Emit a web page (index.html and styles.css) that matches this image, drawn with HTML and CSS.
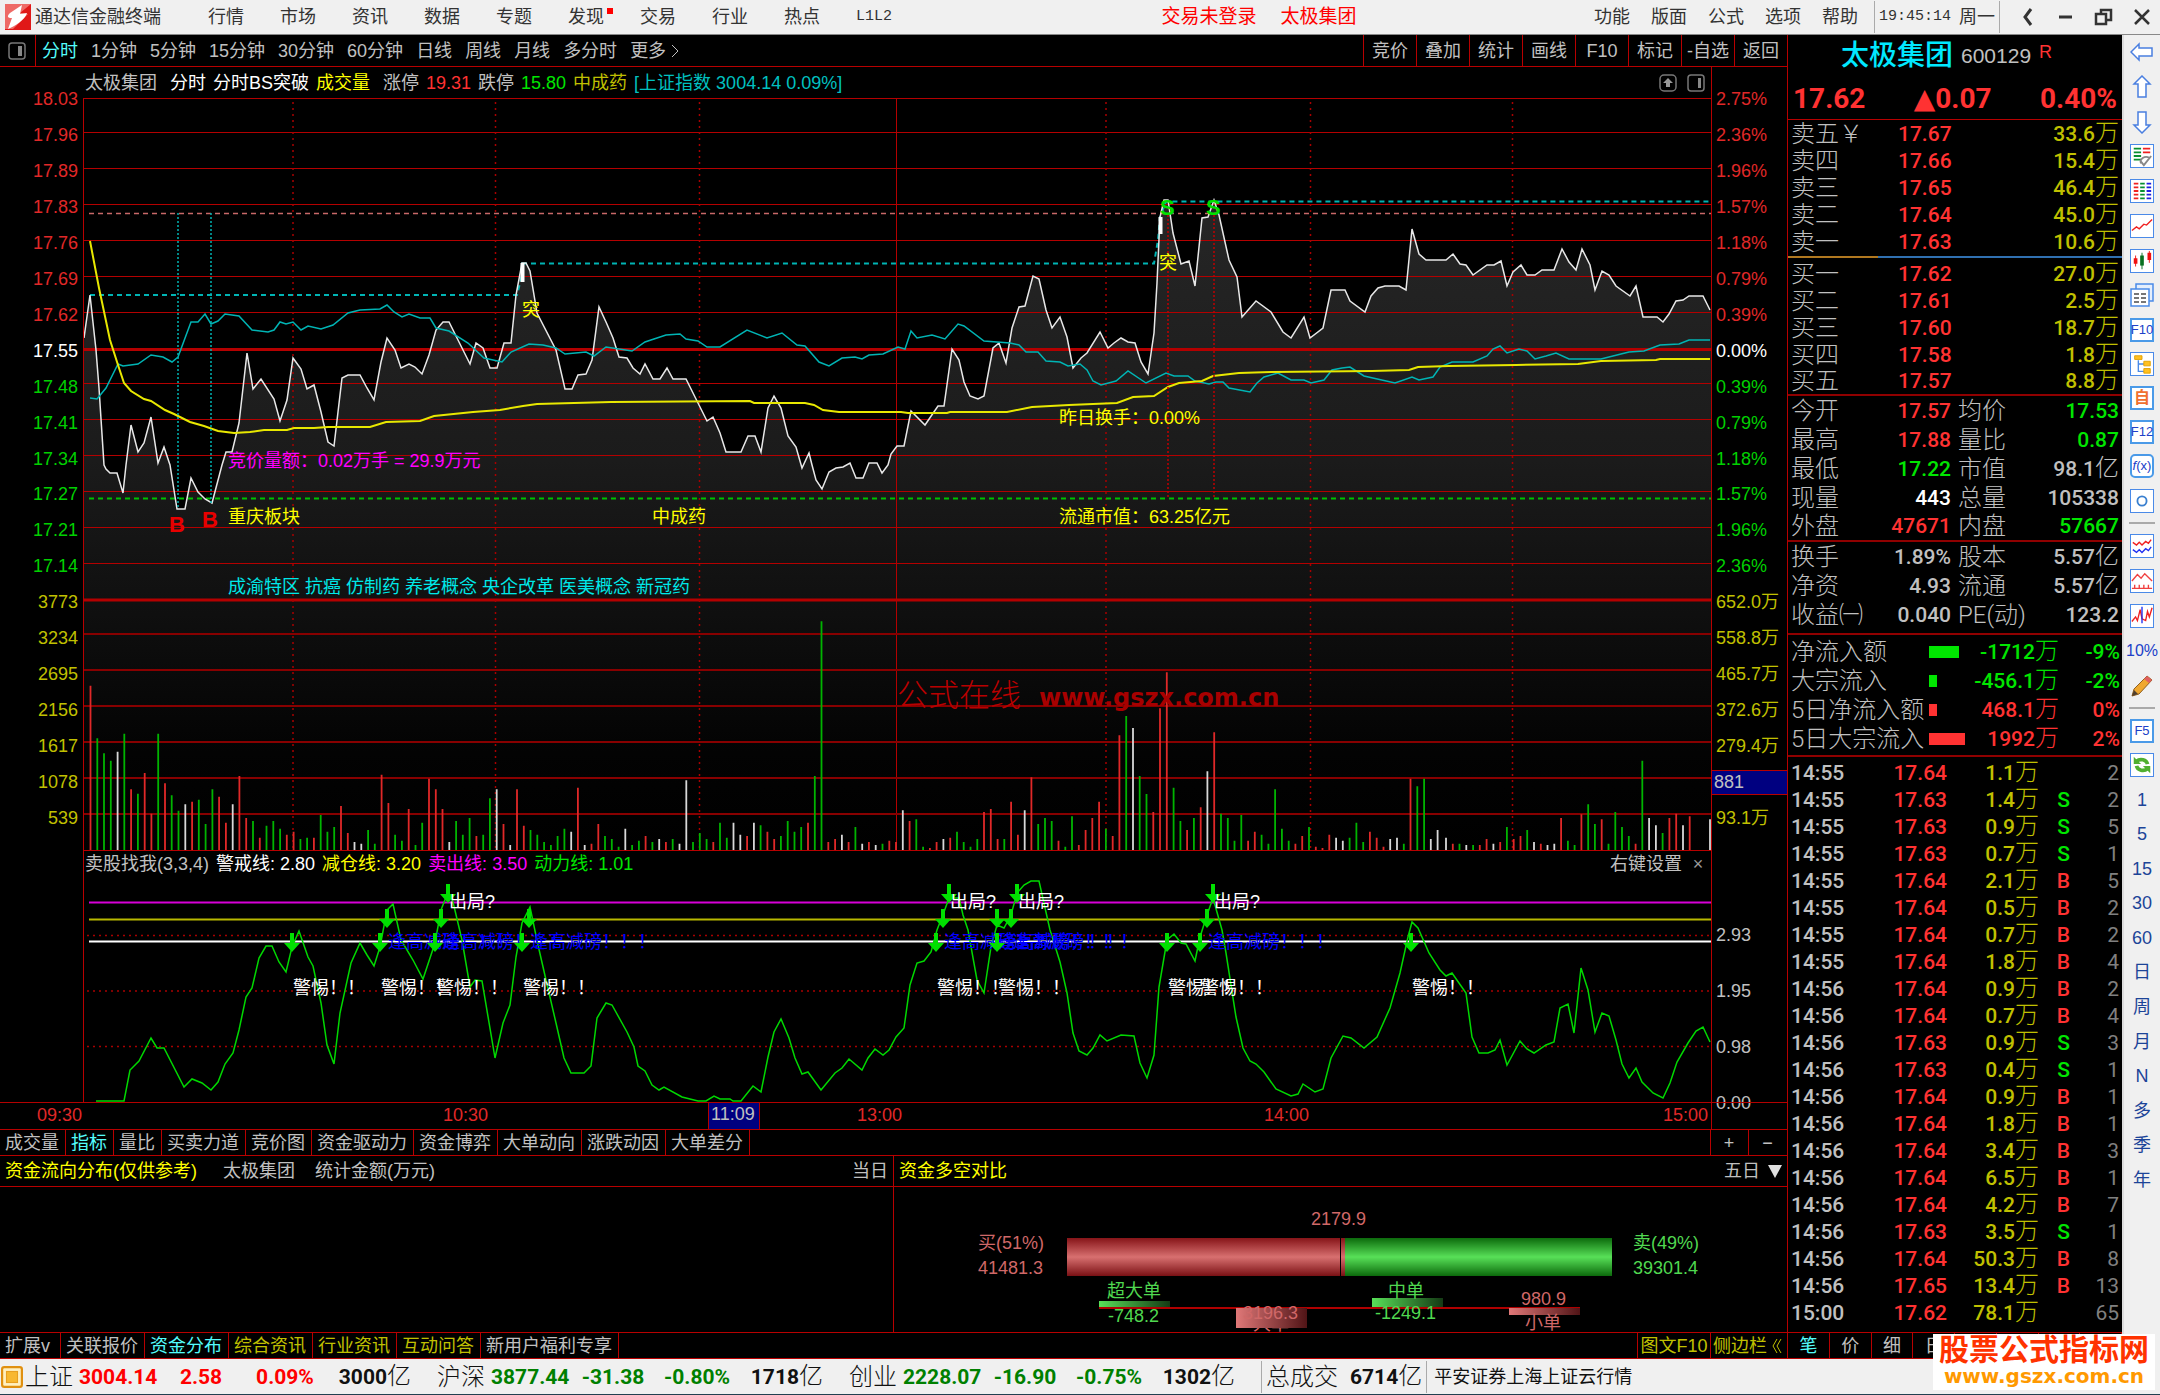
FILE: index.html
```html
<!DOCTYPE html>
<html lang="zh-CN">
<head>
    <meta charset="UTF-8">
    <meta name="viewport" content="width=device-width, initial-scale=1.0">
    <title>通达信金融终端</title>
    <link rel="stylesheet" href="styles.css">
</head>
<body>

    <header class="titlebar">
        <svg class="logo" viewBox="0 0 26 26">
            <rect width="26" height="26" fill="#e01818"/>
            <path d="M0 0h26L15 9l8 1L8 25H0z" fill="#ee6a66"/>
            <path d="M17 1L5 9c-3 3-3 5 2 5L3 25c7-3 17-9 19-16l-7 1z" fill="#fff"/>
        </svg>
        <span class="app-name">通达信金融终端</span>
        <nav class="menu">
            <button>行情</button>
            <button>市场</button>
            <button>资讯</button>
            <button>数据</button>
            <button>专题</button>
            <button class="has-dot">发现</button>
            <button>交易</button>
            <button>行业</button>
            <button>热点</button>
            <button class="mono">L1L2</button>
        </nav>
        <div class="account">
            <button>交易未登录</button>
            <button>太极集团</button>
        </div>
        <nav class="menu-right">
            <button>功能</button>
            <button>版面</button>
            <button>公式</button>
            <button>选项</button>
            <button>帮助</button>
        </nav>
        <div class="clock"><span class="mono">19:45:14</span> 周一</div>
        <div class="window-btns">
            <button aria-label="后退"><svg viewBox="0 0 20 20"><path d="M13 2L7 10l6 8" stroke-width="3"/></svg></button>
            <button aria-label="最小化"><svg viewBox="0 0 20 20"><path d="M3 10h13" stroke-width="3"/></svg></button>
            <button aria-label="还原"><svg viewBox="0 0 20 20"><path d="M2 7h10v10H2zM7 7V3h10v10h-5" stroke-width="2.5"/></svg></button>
            <button aria-label="关闭"><svg viewBox="0 0 20 20"><path d="M3 3l14 14M17 3L3 17" stroke-width="2.5"/></svg></button>
        </div>
    </header>

    <div class="main">
        <div class="workspace">

            <nav class="toolbar">
                <button class="toggle" aria-label="侧栏">
                    <svg viewBox="0 0 18 18"><rect x="1" y="1" width="16" height="16" rx="3" fill="none" stroke="#777" stroke-width="1.5"/><rect x="10" y="4" width="4" height="10" fill="#888"/></svg>
                </button>
                <div class="periods">
                    <button class="active">分时</button>
                    <button>1分钟</button>
                    <button>5分钟</button>
                    <button>15分钟</button>
                    <button>30分钟</button>
                    <button>60分钟</button>
                    <button>日线</button>
                    <button>周线</button>
                    <button>月线</button>
                    <button>多分时</button>
                    <button class="more">更多<svg viewBox="0 0 10 18"><path d="M2 3l6 6-6 6" fill="none" stroke="#c0c0c0"/></svg></button>
                </div>
                <div class="tools">
                    <button>竞价</button>
                    <button>叠加</button>
                    <button>统计</button>
                    <button>画线</button>
                    <button>F10</button>
                    <button>标记</button>
                    <button>-自选</button>
                    <button>返回</button>
                </div>
            </nav>

            <section class="chart">
                <div class="axis axis-left">
                    <span class="up">18.03</span><span class="up">17.96</span><span class="up">17.89</span><span class="up">17.83</span><span class="up">17.76</span><span class="up">17.69</span><span class="up">17.62</span>
                    <span class="flat">17.55</span>
                    <span class="down">17.48</span><span class="down">17.41</span><span class="down">17.34</span><span class="down">17.27</span><span class="down">17.21</span><span class="down">17.14</span>
                    <span class="vol">3773</span><span class="vol">3234</span><span class="vol">2695</span><span class="vol">2156</span><span class="vol">1617</span><span class="vol">1078</span><span class="vol">539</span>
                </div>

                <div class="legend">
                    <span class="gray wide">太极集团</span>
                    <span class="white">分时</span>
                    <span class="white">分时BS突破</span>
                    <span class="yellow wide">成交量</span>
                    <span class="gray">涨停</span>
                    <span class="up">19.31</span>
                    <span class="gray">跌停</span>
                    <span class="down">15.80</span>
                    <span class="vol">中成药</span>
                    <span class="teal">[上证指数 3004.14 0.09%]</span>
                    <span class="legend-icons">
                        <svg viewBox="0 0 18 18"><rect x="1" y="1" width="16" height="16" rx="4" fill="none" stroke="#777" stroke-width="1.5"/><path d="M9 4l5 5h-3v4H7V9H4z" fill="#999"/></svg>
                        <svg viewBox="0 0 18 18"><rect x="1" y="1" width="16" height="16" rx="3" fill="none" stroke="#777" stroke-width="1.5"/><rect x="11" y="4" width="3" height="10" fill="#888"/></svg>
                    </span>
                </div>

                <svg class="plot" viewBox="84 98 1627 752">
                    <defs>
                        <linearGradient id="shade" gradientUnits="userSpaceOnUse" x1="0" y1="200" x2="0" y2="850">
                            <stop offset="0" stop-color="#262626"/>
                            <stop offset="0.4" stop-color="#1b1b1b"/>
                            <stop offset="0.62" stop-color="#101010"/>
                            <stop offset="0.85" stop-color="#030303"/>
                            <stop offset="1" stop-color="#000"/>
                        </linearGradient>
                    </defs>
                    <path id="price-area" fill="url(#shade)"/>

                    <path class="grid" d="M84 98.5H1711M84 132.5H1711M84 168.5H1711M84 204.5H1711M84 240.5H1711M84 276.5H1711M84 312.5H1711M84 383.5H1711M84 419.5H1711M84 455.5H1711M84 491.5H1711M84 527.5H1711M84 563.5H1711M896.5 98V850"/>
                    <path class="grid mid" d="M84 349.5H1711M84 600H1711"/>
                    <path class="grid low" d="M84 634H1711M84 670H1711M84 706H1711M84 742H1711M84 778H1711M84 814H1711"/>
                    <path class="grid dots" d="M293 102V850M495.5 102V850M699.5 102V850M1106 102V850M1310.5 102V850M1512.5 102V850"/>

                    <path class="dash teal-line" d="M90 295H517L521 279L522 263.5H1154L1158 240L1160 217L1166 201.5H1711"/>
                    <path class="dash pink-line" d="M89 213.5H1711"/>
                    <path class="dash green-line" d="M89 498.5H1711"/>

                    <polyline id="price-line" class="line white-line" points="84,338 90,295 96,350 99,388 104,465 106,469 110,473 117,473 123,493 126,465 131,425 138,452 144,443 151,417 158,463 164,447 170,465 177,509 185,509 191,478 198,492 205,499 212,503 222,465 226,452 232,452 239,423 247,353 253,389 261,379 274,399 280,421 287,400 293,358 301,369 307,389 314,385 321,412 328,442 334,446 342,378 348,375 360,375 367,388 374,400 381,362 387,338 395,350 401,368 409,364 415,367 422,374 429,355 436,330 443,322 449,322 459,342 470,364 476,343 483,348 490,368 497,368 504,343 511,343 516,295 522,263 526,263 530,271 537,313 556,350 565,389 572,389 578,375 586,374 592,360 599,307 606,322 613,338 619,357 627,358 633,368 640,374 645,364 653,379 660,379 667,368 673,379 686,379 699,405 707,421 713,417 720,433 726,452 741,452 748,436 755,436 761,452 768,408 774,396 781,408 788,436 796,447 802,468 809,453 812,465 816,480 822,489 829,472 836,468 843,467 850,463 856,478 863,478 869,463 877,463 882,473 888,465 891,454 897,446 904,446 911,411 925,425 938,406 944,406 952,349 959,360 964,382 970,396 978,399 984,396 993,348 999,343 1006,363 1012,328 1019,307 1025,306 1033,276 1039,279 1046,310 1052,328 1060,317 1067,337 1073,368 1081,358 1087,353 1100,332 1108,348 1114,343 1121,338 1128,342 1135,343 1141,362 1148,374 1154,333 1157,283 1160,217 1164,200 1168,200 1173,233 1181,264 1189,261 1195,286 1202,218 1208,217 1214,200 1219,215 1229,260 1237,277 1242,317 1256,301 1271,312 1283,332 1291,338 1304,317 1310,338 1323,328 1331,290 1345,290 1350,301 1365,312 1371,296 1378,288 1385,286 1399,286 1406,290 1412,229 1419,254 1426,260 1446,260 1453,254 1460,264 1466,265 1473,275 1487,265 1494,265 1501,261 1507,286 1513,272 1521,265 1527,275 1535,275 1542,270 1554,270 1562,249 1569,262 1576,270 1582,249 1590,265 1595,290 1602,271 1609,275 1616,286 1630,296 1636,286 1643,317 1657,317 1663,322 1669,314 1676,301 1683,300 1689,296 1703,296 1710,310"/>
                    <polyline class="line teal-line" points="90,398 97,399 106,388 118,364 123,366 138,364 151,355 163,357 172,362 178,357 191,322 198,322 205,314 211,324 218,321 225,314 239,316 252,330 268,332 274,330 280,322 286,324 293,322 301,330 308,326 321,329 333,325 348,313 360,310 380,309 387,305 394,312 402,317 409,314 420,318 430,318 436,328 449,331 468,343 484,358 502,362 511,352 529,344 543,345 556,348 565,354 586,352 594,356 606,347 632,351 645,342 666,335 680,334 686,339 698,341 707,347 720,347 747,330 767,338 782,333 797,345 805,346 819,362 829,366 842,358 855,357 862,359 869,355 883,354 898,347 905,349 911,331 917,338 932,335 945,339 958,324 964,326 984,341 1010,343 1019,345 1026,352 1038,352 1046,361 1060,362 1068,366 1080,364 1087,370 1093,381 1101,385 1116,381 1128,371 1146,383 1166,373 1174,376 1188,376 1195,381 1209,384 1216,382 1223,382 1229,388 1250,392 1257,383 1264,377 1278,373 1291,380 1304,380 1311,383 1324,380 1332,370 1342,368 1350,367 1364,376 1395,383 1412,377 1419,380 1433,377 1440,367 1452,362 1473,362 1487,356 1493,349 1500,346 1507,353 1519,349 1527,351 1535,359 1546,356 1556,353 1569,359 1601,359 1629,352 1644,351 1660,345 1679,344 1689,340 1710,340"/>
                    <polyline class="line yellow-line" points="90,241 99,288 110,340 118,365 124,383 131,391 144,399 151,401 165,410 174,414 190,422 204,426 218,431 234,433 250,432 264,430 287,430 294,428 314,428 328,427 370,427 386,422 420,421 434,416 473,412 500,410 523,406 537,404 574,403 611,402 750,401 754,403 805,403 814,405 823,410 839,412 901,412 908,413 947,413 950,412 1007,412 1032,407 1069,405 1117,403 1133,397 1154,396 1168,387 1179,383 1202,381 1213,376 1239,373 1271,372 1372,371 1409,370 1418,367 1449,366 1516,365 1578,364 1601,361 1656,360 1660,359 1710,359"/>

                    <path class="fine teal-line" d="M178 213V509M211 213V503"/>
                    <path class="fine red-line" d="M1168 215V499M1214 215V499"/>
                    <path d="M522.5 263V282M1160.5 217V234" stroke="#fff" stroke-width="4"/>

                    <g id="volume"></g>

                    <g class="mark sell"><text x="1160" y="215">S</text><text x="1206" y="215">S</text></g>
                    <g class="mark buy"><text x="169" y="532">B</text><text x="202" y="527">B</text></g>
                    <g class="note yellow-fill">
                        <text x="522" y="316">突</text><text x="1159" y="269">突</text>
                        <text x="1059" y="424">昨日换手：0.00%</text>
                        <text x="228" y="523">重庆板块</text><text x="652" y="523">中成药</text><text x="1059" y="523">流通市值：63.25亿元</text>
                    </g>
                    <text class="note magenta-fill" x="228" y="467">竞价量额：0.02万手 = 29.9万元</text>
                    <text class="note cyan-fill" x="228" y="593">成渝特区 抗癌 仿制药 养老概念 央企改革 医美概念 新冠药</text>
                    <text class="mark-cn" x="897" y="706">公式在线</text>
                    <text class="mark-url" x="1039" y="706">www.gszx.com.cn</text>
                </svg>

                <div class="axis axis-right">
                    <span class="up">2.75%</span><span class="up">2.36%</span><span class="up">1.96%</span><span class="up">1.57%</span><span class="up">1.18%</span><span class="up">0.79%</span><span class="up">0.39%</span>
                    <span class="flat">0.00%</span>
                    <span class="down">0.39%</span><span class="down">0.79%</span><span class="down">1.18%</span><span class="down">1.57%</span><span class="down">1.96%</span><span class="down">2.36%</span>
                    <span class="vol">652.0万</span><span class="vol">558.8万</span><span class="vol">465.7万</span><span class="vol">372.6万</span><span class="vol">279.4万</span><span class="cursor"><b>881</b></span><span class="vol">93.1万</span>
                </div>

                <div class="axis-blank"></div>
                <div class="legend sub">
                    <span class="gray">卖股找我(3,3,4)</span>
                    <span class="white">警戒线: 2.80</span>
                    <span class="yellow">减仓线: 3.20</span>
                    <span class="magenta">卖出线: 3.50</span>
                    <span class="green">动力线: 1.01</span>
                    <span class="legend-icons"><span class="gray">右键设置</span><button class="close" aria-label="关闭指标">×</button></span>
                </div>

                <svg class="plot indicator" viewBox="84 877 1627 225">
                    <defs>
                        <symbol id="arrow" viewBox="0 0 16 20" width="16" height="20"><path d="M6 0h4v10h6l-8 9l-8-9h6z" fill="#00e000"/></symbol>
                    </defs>
                    <path class="grid dots" d="M87 935.5H1711M87 991H1711M87 1046.5H1711"/>
                    <path d="M89 902.5H1711" stroke="#d800d8" stroke-width="2"/>
                    <path d="M89 919.5H1711" stroke="#b8b800" stroke-width="2"/>
                    <path d="M89 941.5H1711" stroke="#fff" stroke-width="2"/>
                    <polyline class="line lime-line" points="96,1101 124,1101 130,1070 139,1061 151,1038 157,1048 164,1048 184,1087 192,1079 202,1083 211,1090 218,1082 225,1064 233,1053 239,1030 246,997 252,988 259,958 266,946 272,946 279,962 286,972 292,947 299,931 308,957 313,966 321,1003 327,1045 334,1064 340,1013 351,963 360,943 367,955 374,966 380,947 387,910 393,904 401,940 413,960 423,979 435,943 441,910 448,892 453,902 462,940 470,987 475,980 482,981 495,1058 503,1023 510,1005 516,957 522,923 530,907 538,945 546,980 556,1023 564,1058 571,1073 584,1073 591,1066 597,1018 606,1003 612,1005 627,1032 634,1047 638,1066 645,1071 652,1085 659,1090 664,1087 682,1097 698,1101 706,1101 714,1096 720,1099 730,1099 733,1101 741,1101 753,1086 761,1092 768,1057 774,1032 781,1019 789,1038 795,1058 802,1074 808,1072 821,1090 835,1073 842,1068 849,1059 862,1070 868,1058 875,1049 883,1055 889,1050 896,1037 904,1028 910,985 917,963 924,961 931,952 937,930 944,912 949,898 959,898 963,915 968,930 977,980 984,993 991,947 997,925 1004,928 1011,915 1017,893 1024,885 1031,881 1039,881 1050,930 1060,962 1067,993 1073,1033 1079,1051 1087,1055 1093,1048 1100,1035 1107,1041 1121,1035 1134,1036 1140,1063 1147,1078 1154,1055 1159,987 1167,940 1174,934 1181,943 1186,944 1195,961 1200,937 1207,915 1213,898 1222,930 1226,953 1236,1017 1243,1048 1250,1061 1256,1064 1264,1072 1276,1089 1291,1096 1298,1094 1303,1084 1315,1092 1323,1089 1331,1058 1343,1036 1351,1038 1364,1048 1377,1037 1390,1008 1400,973 1408,937 1412,922 1418,928 1429,953 1440,970 1446,976 1452,973 1466,993 1472,1037 1479,1053 1488,1053 1495,1050 1500,1040 1507,1065 1520,1041 1527,1049 1534,1053 1546,1045 1554,1042 1560,1008 1568,1004 1574,1033 1581,968 1588,990 1595,1032 1602,1013 1609,1016 1616,1040 1622,1064 1629,1078 1636,1068 1642,1082 1653,1093 1663,1098 1670,1083 1677,1062 1688,1043 1696,1031 1703,1027 1710,1042"/>
                    <g class="note blue-fill">
                        <text x="388" y="948">逢高减磅！！！</text><text x="442" y="948">逢高减磅！！！</text><text x="530" y="948">逢高减磅！！！</text>
                        <text x="944" y="948">逢高减磅！！！</text><text x="998" y="948">逢高减磅！！！</text><text x="1012" y="948">逢高减磅！！！</text><text x="1208" y="948">逢高减磅！！！</text>
                    </g>
                    <use href="#arrow" x="440" y="884"/><use href="#arrow" x="941" y="884"/><use href="#arrow" x="1009" y="884"/><use href="#arrow" x="1205" y="884"/>
                    <use href="#arrow" x="379" y="909"/><use href="#arrow" x="433" y="909"/><use href="#arrow" x="521" y="909"/><use href="#arrow" x="935" y="909"/><use href="#arrow" x="989" y="909"/><use href="#arrow" x="1003" y="909"/><use href="#arrow" x="1199" y="909"/>
                    <use href="#arrow" x="284" y="933"/><use href="#arrow" x="372" y="933"/><use href="#arrow" x="427" y="933"/><use href="#arrow" x="514" y="933"/><use href="#arrow" x="928" y="933"/><use href="#arrow" x="989" y="933"/><use href="#arrow" x="1159" y="933"/><use href="#arrow" x="1192" y="933"/><use href="#arrow" x="1403" y="933"/>
                    <g class="note white-fill">
                        <text x="449" y="908">出局?</text><text x="950" y="908">出局?</text><text x="1018" y="908">出局?</text><text x="1214" y="908">出局?</text>
                        <text x="293" y="994">警惕！！</text><text x="381" y="994">警惕！！</text><text x="436" y="994">警惕！！</text><text x="523" y="994">警惕！！</text>
                        <text x="937" y="994">警惕！！</text><text x="998" y="994">警惕！！</text><text x="1168" y="994">警惕！！</text><text x="1201" y="994">警惕！！</text><text x="1412" y="994">警惕！！</text>
                    </g>
                </svg>
                <div class="axis axis-sub">
                    <span>2.93</span><span>1.95</span><span>0.98</span><span>0.00</span>
                </div>

                <svg class="timeline" viewBox="0 1102 1787 27">
                    <path class="grid" d="M0 1102.5H1787M708.5 1102V1129M759.5 1102V1129M1711.5 1102V1129"/>
                    <rect x="709" y="1103" width="50" height="26" fill="#000080"/>
                    <g class="note time">
                        <text x="37" y="1121">09:30</text><text x="443" y="1121">10:30</text><text x="857" y="1121">13:00</text><text x="1264" y="1121">14:00</text><text x="1663" y="1121">15:00</text>
                    </g>
                    <text class="note gray-fill" x="711" y="1120">11:09</text>
                </svg>
            </section>

            <nav class="tabs">
                <button>成交量</button>
                <button class="active">指标</button>
                <button>量比</button>
                <button>买卖力道</button>
                <button>竞价图</button>
                <button>资金驱动力</button>
                <button>资金博弈</button>
                <button>大单动向</button>
                <button>涨跌动因</button>
                <button>大单差分</button>
                <span class="tabs-end zoom">
                    <button aria-label="放大">+</button>
                    <button aria-label="缩小">−</button>
                </span>
            </nav>

            <div class="funds">
                <section class="fund-panel">
                    <div class="fund-head">
                        <h2>资金流向分布(仅供参考)</h2>
                        <span>太极集团</span>
                        <span>统计金额(万元)</span>
                        <span class="push">当日</span>
                    </div>
                </section>
                <section class="fund-panel">
                    <div class="fund-head">
                        <h2>资金多空对比</h2>
                        <button class="push">五日 <i class="caret"></i></button>
                    </div>
                    <svg class="balance" viewBox="894 1187 893 145">
                        <defs>
                            <linearGradient id="buy" x2="0" y2="1"><stop offset="0" stop-color="#861418"/><stop offset="0.5" stop-color="#d87070"/><stop offset="1" stop-color="#7a1014"/></linearGradient>
                            <linearGradient id="sell" x2="0" y2="1"><stop offset="0" stop-color="#0c6a0c"/><stop offset="0.5" stop-color="#58e058"/><stop offset="1" stop-color="#0c6a0c"/></linearGradient>
                            <linearGradient id="out"><stop offset="0" stop-color="#58e058"/><stop offset="1" stop-color="#143a14"/></linearGradient>
                            <linearGradient id="in"><stop offset="0" stop-color="#e07878"/><stop offset="1" stop-color="#501416"/></linearGradient>
                        </defs>
                        <rect x="1067" y="1238" width="273" height="38" fill="url(#buy)"/>
                        <rect x="1341" y="1238" width="4" height="38" fill="url(#buy)"/>
                        <rect x="1345" y="1238" width="267" height="38" fill="url(#sell)"/>
                        <g class="note rose-fill">
                            <text x="1311" y="1225">2179.9</text>
                            <text x="978" y="1249">买(51%)</text><text x="978" y="1274">41481.3</text>
                            <text x="1253" y="1330">大单</text>
                        </g>
                        <path d="M1099 1308H1580" stroke="#b00000" stroke-width="2"/>
                        <rect x="1099" y="1301" width="71" height="6" fill="url(#out)"/>
                        <rect x="1372" y="1298" width="71" height="9" fill="url(#out)"/>
                        <rect x="1236" y="1308" width="71" height="20" fill="url(#in)"/>
                        <rect x="1509" y="1308" width="71" height="7" fill="url(#in)"/>
                        <g class="note rose-fill">
                            <text x="1243" y="1319">3196.3</text>
                            <text x="1521" y="1305">980.9</text><text x="1525" y="1329">小单</text>
                        </g>
                        <g class="note leaf-fill">
                            <text x="1633" y="1249">卖(49%)</text><text x="1633" y="1274">39301.4</text>
                            <text x="1107" y="1297">超大单</text><text x="1108" y="1322">-748.2</text>
                            <text x="1388" y="1297">中单</text><text x="1375" y="1319">-1249.1</text>
                        </g>
                    </svg>
                </section>
            </div>

            <nav class="tabs bottom">
                <button class="expand">扩展v</button>
                <button>关联报价</button>
                <button class="active">资金分布</button>
                <button class="vol">综合资讯</button>
                <button class="vol">行业资讯</button>
                <button class="vol">互动问答</button>
                <button>新用户福利专享</button>
                <span class="tabs-end">
                    <button class="vol">图文F10</button>
                    <button class="vol side">侧边栏<svg viewBox="0 0 12 18"><path d="M6 2L2 9l4 7M10 2L6 9l4 7" fill="none" stroke="#c0c000"/></svg></button>
                </span>
            </nav>
        </div>

        <aside class="quote">
            <div class="quote-head">
                <div class="stock"><h1>太极集团</h1><span>600129</span><sup>R</sup></div>
                <div class="last"><span>17.62</span><span>▲0.07</span><span>0.40%</span></div>
            </div>

            <table class="book">
                <tr><th>卖五￥</th><td class="up">17.67</td><td class="vol">33.6<i>万</i></td></tr>
                <tr><th>卖四</th><td class="up">17.66</td><td class="vol">15.4<i>万</i></td></tr>
                <tr><th>卖三</th><td class="up">17.65</td><td class="vol">46.4<i>万</i></td></tr>
                <tr><th>卖二</th><td class="up">17.64</td><td class="vol">45.0<i>万</i></td></tr>
                <tr><th>卖一</th><td class="up">17.63</td><td class="vol">10.6<i>万</i></td></tr>
            </table>
            <div class="ratio"></div>
            <table class="book line-below">
                <tr><th>买一</th><td class="up">17.62</td><td class="vol">27.0<i>万</i></td></tr>
                <tr><th>买二</th><td class="up">17.61</td><td class="vol">2.5<i>万</i></td></tr>
                <tr><th>买三</th><td class="up">17.60</td><td class="vol">18.7<i>万</i></td></tr>
                <tr><th>买四</th><td class="up">17.58</td><td class="vol">1.8<i>万</i></td></tr>
                <tr><th>买五</th><td class="up">17.57</td><td class="vol">8.8<i>万</i></td></tr>
            </table>

            <table class="facts line-below">
                <tr><th>今开</th><td class="up">17.57</td><th>均价</th><td class="down">17.53</td></tr>
                <tr><th>最高</th><td class="up">17.88</td><th>量比</th><td class="down">0.87</td></tr>
                <tr><th>最低</th><td class="down">17.22</td><th>市值</th><td>98.1<i>亿</i></td></tr>
                <tr><th>现量</th><td class="white">443</td><th>总量</th><td>105338</td></tr>
                <tr><th>外盘</th><td class="up">47671</td><th>内盘</th><td class="down">57667</td></tr>
            </table>
            <table class="facts">
                <tr><th>换手</th><td>1.89%</td><th>股本</th><td>5.57<i>亿</i></td></tr>
                <tr><th>净资</th><td>4.93</td><th>流通</th><td>5.57<i>亿</i></td></tr>
                <tr><th>收益㈠</th><td>0.040</td><th>PE(动)</th><td>123.2</td></tr>
            </table>

            <div class="flow-box">
                <table class="flows">
                    <tr class="down"><th>净流入额</th><td><span class="bar" style="width: 30px"></span></td><td>-1712<i>万</i></td><td>-9%</td></tr>
                    <tr class="down"><th>大宗流入</th><td><span class="bar" style="width: 8px"></span></td><td>-456.1<i>万</i></td><td>-2%</td></tr>
                    <tr class="up"><th>5日净流入额</th><td><span class="bar" style="width: 8px"></span></td><td>468.1<i>万</i></td><td>0%</td></tr>
                    <tr class="up"><th>5日大宗流入</th><td><span class="bar" style="width: 36px"></span></td><td>1992<i>万</i></td><td>2%</td></tr>
                </table>
            </div>

            <table class="ticks">
                <tr><td>14:55</td><td>17.64</td><td>1.1<i>万</i></td><td></td><td>2</td></tr>
                <tr><td>14:55</td><td>17.63</td><td>1.4<i>万</i></td><td class="down">S</td><td>2</td></tr>
                <tr><td>14:55</td><td>17.63</td><td>0.9<i>万</i></td><td class="down">S</td><td>5</td></tr>
                <tr><td>14:55</td><td>17.63</td><td>0.7<i>万</i></td><td class="down">S</td><td>1</td></tr>
                <tr><td>14:55</td><td>17.64</td><td>2.1<i>万</i></td><td class="up">B</td><td>5</td></tr>
                <tr><td>14:55</td><td>17.64</td><td>0.5<i>万</i></td><td class="up">B</td><td>2</td></tr>
                <tr><td>14:55</td><td>17.64</td><td>0.7<i>万</i></td><td class="up">B</td><td>2</td></tr>
                <tr><td>14:55</td><td>17.64</td><td>1.8<i>万</i></td><td class="up">B</td><td>4</td></tr>
                <tr><td>14:56</td><td>17.64</td><td>0.9<i>万</i></td><td class="up">B</td><td>2</td></tr>
                <tr><td>14:56</td><td>17.64</td><td>0.7<i>万</i></td><td class="up">B</td><td>4</td></tr>
                <tr><td>14:56</td><td>17.63</td><td>0.9<i>万</i></td><td class="down">S</td><td>3</td></tr>
                <tr><td>14:56</td><td>17.63</td><td>0.4<i>万</i></td><td class="down">S</td><td>1</td></tr>
                <tr><td>14:56</td><td>17.64</td><td>0.9<i>万</i></td><td class="up">B</td><td>1</td></tr>
                <tr><td>14:56</td><td>17.64</td><td>1.8<i>万</i></td><td class="up">B</td><td>1</td></tr>
                <tr><td>14:56</td><td>17.64</td><td>3.4<i>万</i></td><td class="up">B</td><td>3</td></tr>
                <tr><td>14:56</td><td>17.64</td><td>6.5<i>万</i></td><td class="up">B</td><td>1</td></tr>
                <tr><td>14:56</td><td>17.64</td><td>4.2<i>万</i></td><td class="up">B</td><td>7</td></tr>
                <tr><td>14:56</td><td>17.63</td><td>3.5<i>万</i></td><td class="down">S</td><td>1</td></tr>
                <tr><td>14:56</td><td>17.64</td><td>50.3<i>万</i></td><td class="up">B</td><td>8</td></tr>
                <tr><td>14:56</td><td>17.65</td><td>13.4<i>万</i></td><td class="up">B</td><td>13</td></tr>
                <tr><td>15:00</td><td>17.62</td><td>78.1<i>万</i></td><td></td><td>65</td></tr>
            </table>

            <nav class="quote-tabs">
                <button class="active">笔</button><button>价</button><button>细</button><button>日</button><span></span><span></span><span></span><span></span>
            </nav>
        </aside>

        <nav class="sidebar">
            <div class="side-group">
                <button aria-label="返回"><svg viewBox="0 0 24 24"><path d="M1 12l8-8v4h13v8H9v4z" fill="#fff" stroke="#4a7fe0" stroke-width="1.5"/></svg></button>
                <button aria-label="向上"><svg viewBox="0 0 24 24"><path d="M12 1l8 8h-4v13H8V9H4z" fill="#fff" stroke="#4a7fe0" stroke-width="1.5"/></svg></button>
                <button aria-label="向下"><svg viewBox="0 0 24 24"><path d="M12 23l8-8h-4V2H8v13H4z" fill="#fff" stroke="#4a7fe0" stroke-width="1.5"/></svg></button>
                <button class="boxed" aria-label="自选报价"><svg viewBox="0 0 24 24"><path d="M3 4h8M3 8h8M3 12h8M3 16h8" stroke="#089030" stroke-width="2"/><path d="M13 4h8M13 8h8" stroke="#f02020" stroke-width="2"/><path d="M10 17l4 5 8-10M11 20a6 5 0 0 1 9-6" fill="none" stroke="#888" stroke-width="2"/></svg></button>
                <button class="boxed" aria-label="行情列表"><svg viewBox="0 0 24 24" stroke-width="2"><path d="M3 4h5M3 8h5M3 12h5M3 16h5M3 20h5" stroke="#f02020"/><path d="M10 4h5M10 8h5M10 12h5M10 16h5M10 20h5" stroke="#089030"/><path d="M17 4h5M17 8h5M17 12h5M17 16h5M17 20h5" stroke="#2020e0"/></svg></button>
                <button class="boxed" aria-label="分时图"><svg viewBox="0 0 24 24"><path d="M1 17l5-4 3 2 5-5 3 1 6-6" fill="none" stroke="#f02020" stroke-width="1.5"/></svg></button>
                <button class="boxed" aria-label="K线图"><svg viewBox="0 0 24 24"><path d="M5 6v12M20 1v13" stroke="#f01010"/><path d="M12 3v18" stroke="#087020"/><path d="M3 9h4v6H3zM18 3h4v8h-4z" fill="#f01010"/><path d="M10 6h4v11h-4z" fill="#087020"/></svg></button>
                <button aria-label="多窗口"><svg viewBox="0 0 24 24"><path d="M6 1h17v17H6z" fill="#e4eefc" stroke="#4a8ae8" stroke-width="1.5"/><path d="M1 6h18v17H1z" fill="#fff" stroke="#4a8ae8" stroke-width="1.5"/><path d="M4 11h5M11 11h5M4 15h5M11 15h5M4 19h5M11 19h5" stroke="#777" stroke-width="2"/></svg></button>
                <button class="boxed label">F10</button>
                <button class="boxed" aria-label="板块树"><svg viewBox="0 0 24 24"><path d="M8 8v12h7M8 12h7" fill="none" stroke="#4a8ae8" stroke-width="1.5"/><path d="M4 3h8v4H4zM14 9h7v5h-7zM14 17h7v5h-7z" fill="#ffc020" stroke="#e0a000"/></svg></button>
                <button class="boxed label orange">自</button>
                <button class="boxed label">F12</button>
                <button class="boxed label fx"><i>f</i>(x)</button>
                <button class="boxed" aria-label="刷新"><svg viewBox="0 0 24 24"><circle cx="12" cy="12" r="5" fill="none" stroke="#3a80d0" stroke-width="2"/></svg></button>
            </div>
            <hr>
            <div class="side-group short">
                <button class="boxed" aria-label="叠加"><svg viewBox="0 0 24 24" fill="none" stroke-width="1.5"><path d="M2 8l4 3 3-3 3 3 4-4 3 2 3-4" stroke="#f02020"/><path d="M2 16l4 3 3-3 3 3 4-4 3 2 3-4" stroke="#2030f0"/></svg></button>
                <button class="boxed" aria-label="主力"><svg viewBox="0 0 24 24" fill="none" stroke="#f04040" stroke-width="1.5"><path d="M1 12l6-7 4 4 4-5 8 8M1 20h22M4 20v-4M9 20v-4M14 20v-4M19 20v-4"/></svg></button>
                <button class="boxed" aria-label="对比"><svg viewBox="0 0 24 24" fill="none" stroke-width="1.5"><path d="M1 18l4-5 2 4 3-12 2 10 4 2 2-10 2 6 3-10" stroke="#f02020"/><path d="M12 2v18" stroke="#2030f0"/></svg></button>
                <button class="label percent">10%</button>
                <button aria-label="画笔"><svg viewBox="0 0 24 24"><path d="M2 22l2-7L17 2l5 4L9 20z" fill="#f0a830" stroke="#906020"/><path d="M17 2l5 4-3 3-5-4z" fill="#e06060"/><path d="M2 22l2-6 4 4z" fill="#504030"/></svg></button>
            </div>
            <hr>
            <div class="side-group">
                <button class="boxed label">F5</button>
                <button class="boxed" aria-label="重新连接"><svg viewBox="0 0 24 24" fill="none" stroke="#50b030" stroke-width="4"><path d="M18 11a7 6 0 0 0-12-3M6 13a7 6 0 0 0 12 3"/><path d="M3 3v8h8zM21 21v-8h-8z" fill="#50b030" stroke="none"/></svg></button>
                <button>1</button>
                <button>5</button>
                <button>15</button>
                <button>30</button>
                <button>60</button>
                <button>日</button>
                <button>周</button>
                <button>月</button>
                <button>N</button>
                <button>多</button>
                <button>季</button>
                <button>年</button>
            </div>
        </nav>
    </div>

    <footer class="status">
        <svg class="status-icon" viewBox="0 0 20 20"><rect x="1" y="1" width="18" height="18" rx="2" fill="#fff0c0" stroke="#e09010" stroke-width="2"/><rect x="5" y="5" width="10" height="10" fill="#f8b830" stroke="#e8a020"/></svg>
        <div class="index rise"><span>上证</span><b>3004.14</b><b>2.58</b><b>0.09%</b><em>3000<i>亿</i></em></div>
        <div class="index fall"><span>沪深</span><b>3877.44</b><b>-31.38</b><b>-0.80%</b><em>1718<i>亿</i></em></div>
        <div class="index fall"><span>创业</span><b>2228.07</b><b>-16.90</b><b>-0.75%</b><em>1302<i>亿</i></em></div>
        <div class="total"><span>总成交</span><em>6714<i>亿</i></em></div>
        <div class="server">平安证券上海上证云行情</div>
    </footer>

    <div class="site-mark">
        <strong>股票公式指标网</strong>
        <span>www.gszx.com.cn</span>
    </div>

    <script>
        const VOLUME = [
            { x: 90.5, bars: "R493 G335 G290 G268 W295 G349 R182 G169 R231 R109 G349 R200 G164 G118 W137 R145 G151 G78 G182 R160 R82 W137 R222 R96 G87 R37 G73 G87 G64 R46 R55 G33 G37 R37 G105 G55 G69 R132 R51 W24 W19 G60 G19 R226 R141 G46 G28 R123 G15 G82 R214 R182 R123 W24 G87 G46 G96 R42 G46 G155 W182 R78 W15 R182 R73 G60 G46 G24 G15 G42 G64 W55 R187 W15 R19 R78 G42 G33 G10 W64 G15 G28 R42 G24 W33 R24 G33 W19 W209 G24 G51 G33 R24" },
            { x: 720, bars: "G82 G37 W82 W46 R42 W82 G74 R55 R33 G42 G87 G55 G69 R82 G222 G686 R24 R33 W46 R24 G69 W19 R24 W15 G19 R28 R24 W119 R87 G92 G10 R6 R24 W33 R37 G55 G24 G10 G33 R114 R123 R33 G33 R145 R46 W119 R218 G78 G96 G87 R28 G10 G101 R15 R60 R96 R145 G64 R42 R344 G402 W366 G222 G168 R114 R425 R533 G187 G87 R60 G96 R128 W236 R353 G109 G96 G28 G105 R28 R55 G46 G19 G182 G64 G28 R19 R42 G69 R10 R6 R46 W37 W28 G37 G82 G24 R55 R37 R10 W33 W37 G19 R214 G191 G214 W33 W60" },
            { x: 1446, bars: "W37 R19 G19 W15 G15 R15 R33 W19 R24 G69 R33 R42 G60 W24 R19 W15 W19 R96 G28 G15 R107 G137 G78 R92 G19 G114 G69 G42 R19 G268 W96 W74 G51 R96 R109 W74 R101" },
            { x: 1710, bars: "W92" }
        ];
        const COLORS = { R: "#e02828", G: "#00b400", W: "#d8d8d8" };
        const STEP = 6.77;
        const BASE = 850;

        function drawVolume() {
            const paths = { R: "", G: "", W: "" };
            VOLUME.forEach(part => {
                part.bars.split(" ").forEach((bar, i) => {
                    const x = part.x + i * STEP;
                    const h = Number(bar.slice(1)) / 3;
                    paths[bar[0]] += `M${x.toFixed(1)} ${BASE}v${(-h).toFixed(1)}`;
                });
            });
            document.getElementById("volume").innerHTML = Object.keys(paths)
                .map(c => `<path d="${paths[c]}" stroke="${COLORS[c]}" stroke-width="1.8"/>`)
                .join("");
        }

        // fill everything under the price line
        function drawArea() {
            const points = document.getElementById("price-line").getAttribute("points");
            document.getElementById("price-area").setAttribute("d", `M84 850L${points}L1711 310V850Z`);
        }

        drawVolume();
        drawArea();
    </script>

</body>
</html>
```
FILE: styles.css
```css
* { margin: 0; padding: 0; box-sizing: border-box; }
body {
    background: #000; color: #c0c0c0;
    font-family: "Liberation Sans", "Noto Sans CJK SC", sans-serif;
    font-size: 18px; line-height: 24px;
    min-height: 100vh; display: flex; flex-direction: column;
    white-space: nowrap; position: relative;
}
button { background: none; border: none; color: inherit; font: inherit; line-height: inherit; cursor: pointer; }
svg { display: block; }
i, em { font-style: normal; }
.mono { font-family: "Liberation Mono", monospace; font-size: 15px; }

/* colours */
.up { color: #ff3232; }
.down { color: #00e600; }
.vol { color: #c0c000; }
.flat, .white { color: #fff; }
.gray { color: #c0c0c0; }
.yellow { color: #ffff00; }
.teal { color: #00c0c0; }
.magenta { color: #ff00ff; }
.green { color: #00e600; }
.active { color: #54fcfc; }

/* title bar */
.titlebar {
    display: flex; align-items: center; height: 35px; padding: 0 8px 0 5px;
    background: #f0f0f0; color: #333; border-bottom: 1px solid #888;
}
.logo { width: 26px; height: 26px; margin-right: 4px; }
.menu { display: flex; gap: 36px; margin-left: 47px; }
.has-dot { position: relative; }
.has-dot::after { content: ''; position: absolute; top: 3px; right: -9px; width: 6px; height: 6px; background: #ff0000; }
.account { display: flex; gap: 24px; margin: 0 auto; padding-left: 32px; color: #ff0000; font-size: 19px; }
.menu-right { display: flex; gap: 21px; padding-right: 16px; }
.clock { display: flex; gap: 8px; padding: 4px; border: solid #aaa; border-width: 0 1px; }
.window-btns { display: flex; gap: 18px; margin-left: 18px; }
.window-btns svg { width: 20px; height: 20px; fill: none; stroke: #333; }

/* main layout */
.main { display: flex; flex: 1; }
.workspace { flex: 1; min-width: 0; display: flex; flex-direction: column; }

.toolbar { display: flex; height: 32px; border-bottom: 1px solid #b80000; }
.toggle { width: 36px; padding: 0 8px; border-right: 1px solid #b80000; }
.toggle svg { width: 18px; }
.periods { display: flex; gap: 13px; padding-left: 6px; }
.more { display: flex; align-items: center; gap: 4px; }
.more svg { width: 10px; height: 18px; }
.tools { display: flex; margin-left: auto; }
.tools button { width: 53px; border-left: 1px solid #b80000; }

/* chart */
.chart { display: grid; grid-template-columns: 84px minmax(0, 1fr) 76px; }
.axis { display: flex; flex-direction: column; padding: 14px 0; line-height: 20px; }
.axis span { flex: 1; display: flex; align-items: center; }
.axis-left { grid-area: 1 / 1 / 3 / 2; text-align: right; }
.axis-left span { justify-content: flex-end; padding-right: 6px; }
.axis-right { grid-area: 1 / 3 / 3 / 4; border-left: 1px solid #b80000; }
.axis-right span { padding-left: 4px; }
.axis .up { color: #e02828; }
.axis .down { color: #00d000; }
.axis .cursor { padding: 0; }
.cursor b {
    flex: 1; height: 25px; line-height: 22px; padding-left: 2px; font-weight: 400;
    background: #000080; border: solid #b80000; border-width: 1px 0;
}
.legend { grid-column: 2; display: flex; align-items: center; gap: 7px; height: 31px; padding-left: 1px; }
.legend .wide { margin-right: 6px; }
.legend-icons { display: flex; align-items: center; gap: 10px; margin-left: auto; padding-right: 6px; }
.legend-icons svg { width: 18px; height: 18px; }
.sub { height: 27px; border-top: 1px solid #b80000; }
.sub .legend-icons { gap: 7px; padding-right: 4px; }
.close { color: #999; width: 18px; }
.axis-blank { grid-area: 3 / 1 / 5 / 2; border-right: 1px solid #b80000; }
.plot { grid-column: 2; width: 100%; box-shadow: -1px 0 #b80000; }
.axis-sub { grid-area: 3 / 3 / 5 / 4; border-left: 1px solid #b80000; height: 252px; padding: 57px 0 0 4px; }
.axis-sub span { flex: none; height: 56px; }
.timeline { grid-column: 1 / 4; width: 100%; }

.grid { stroke: #b40000; fill: none; }
.grid.mid { stroke-width: 3; }
.grid.low { stroke: #880000; stroke-width: 2; }
.grid.dots { stroke: #a80000; stroke-dasharray: 2 4; stroke-width: 1.5; }
.line { fill: none; stroke-width: 1.5; }
.dash { fill: none; stroke-width: 2; stroke-dasharray: 5 4; }
.fine { stroke-width: 1.5; stroke-dasharray: 2 2; }
.white-line { stroke: #e8e8e8; }
.teal-line { stroke: #00b4b4; }
.yellow-line { stroke: #e8e800; stroke-width: 2; }
.pink-line { stroke: #c86868; stroke-width: 1.5; }
.green-line { stroke: #00c000; }
.lime-line { stroke: #00d800; }
.red-line { stroke: #c00000; }
.note { font-size: 18px; fill: #c0c0c0; }
.time { fill: #e02828; }
.yellow-fill { fill: #ffff00; }
.magenta-fill { fill: #ff00ff; }
.cyan-fill { fill: #00e8e8; }
.blue-fill { fill: #0000ff; }
.white-fill { fill: #fff; }
.rose-fill { fill: #d06868; }
.leaf-fill { fill: #50d850; }
.mark { font-size: 22px; font-weight: bold; }
.sell { fill: #00e000; }
.buy { fill: #e80000; }
.mark-cn { font-family: "Liberation Serif", "Noto Sans CJK SC", serif; font-size: 31px; font-weight: 300; fill: #b80000; }
.mark-url { font-family: "DejaVu Sans", sans-serif; font-weight: bold; font-size: 24px; fill: #a80000; }

/* tab rows */
.tabs { display: flex; height: 26px; border-top: 1px solid #b80000; }
.tabs button { padding: 0 6px 0 5px; border-right: 1px solid #b80000; }
.tabs .expand { padding-right: 10px; }
.tabs-end { display: flex; margin-left: auto; border-left: 1px solid #b80000; }
.tabs-end button:last-child { border-right: none; }
.zoom button { width: 38px; }
.tabs.bottom { height: 27px; border-bottom: 1px solid #b80000; }
.bottom .tabs-end button { padding: 0 2px; width: 73px; }
.bottom .tabs-end .side { width: 76px; display: flex; align-items: center; gap: 4px; }
.side svg { width: 12px; height: 18px; }

/* fund panels */
.funds { display: flex; flex: 1; border-top: 1px solid #b80000; }
.fund-panel { flex: 1; min-width: 0; }
.fund-panel + .fund-panel { border-left: 1px solid #b80000; }
.fund-head { display: flex; align-items: center; gap: 20px; height: 31px; padding: 0 5px; border-bottom: 1px solid #b80000; }
.fund-head h2 { font-size: 18px; font-weight: 400; color: #ffff00; margin-right: 6px; }
.push { margin-left: auto; display: flex; align-items: center; gap: 8px; }
.caret { border: 7px solid transparent; border-top: 13px solid #e0e0e0; border-bottom: none; }
.balance { width: 100%; }

/* quote panel */
.quote { width: 335px; border-left: 1px solid #b80000; display: flex; flex-direction: column; }
.quote-head { height: 85px; border-bottom: 1px solid #b80000; }
.stock { display: flex; align-items: center; gap: 8px; height: 41px; padding-left: 53px; font-size: 21px; }
.stock h1 { font-size: 28px; font-weight: 500; color: #00e8ff; }
.stock sup { font-size: 18px; color: #ff3232; margin-bottom: 8px; }
.last { display: flex; justify-content: space-between; padding: 9px 5px; font: bold 28px/28px Roboto, "DejaVu Sans", sans-serif; color: #ff3232; }
table { border-collapse: collapse; width: 100%; table-layout: fixed; font-size: 21px; font-family: Roboto, "Noto Sans CJK SC", sans-serif; font-weight: 500; line-height: 24px; }
th { text-align: left; font-size: 24px; font-weight: 300; color: #c0c0c0; padding-left: 3px; }
td { text-align: right; padding-right: 3px; }
td i, .status i { font-size: 24px; font-weight: 300; line-height: 20px; }
.book tr, .ticks tr { height: 27px; }
.book th { width: 110px; }
.book td:nth-child(2) { width: 56px; }
.ratio { height: 2px; margin: 1px 0 2px; background: linear-gradient(to right, #b07820 27%, #3070b0 27%); }
.line-below { border-bottom: 2px solid #900000; }
.facts tr, .flows tr { height: 29px; }
.facts th { width: 78px; }
.facts td:nth-child(2) { width: 88px; }
.facts th:nth-child(3) { width: 84px; padding-left: 4px; }
.flow-box { margin: 4px 0 2px; padding: 2px 0; border: solid #900000; border-width: 2px 0; }
.flows th { width: 141px; }
.flows td:nth-child(2) { width: 40px; padding: 0; }
.flows td:nth-child(3) { width: 92px; }
.flows td { color: inherit; padding-right: 2px; }
.bar { display: block; height: 12px; background: currentColor; }
.ticks td:nth-child(1) { width: 60px; text-align: left; padding-left: 3px; }
.ticks td:nth-child(2) { width: 102px; color: #ff3232; }
.ticks td:nth-child(3) { width: 92px; color: #c0c000; }
.ticks td:nth-child(4) { width: 34px; text-align: center; padding-left: 12px; }
.ticks td:nth-child(5) { color: #808080; font-weight: 400; }
.quote-tabs { display: flex; margin-top: auto; height: 27px; border: solid #b80000; border-width: 1px 0; }
.quote-tabs > * { flex: 1; border-right: 1px solid #b80000; }

/* right icon bar */
.sidebar { width: 38px; background: #f0f0f0; color: #1c4498; border-left: 2px solid #ddd; }
.side-group { display: flex; flex-direction: column; height: 483px; }
.side-group.short { height: 174px; }
.side-group button { flex: 1; display: flex; align-items: center; justify-content: center; }
.side-group svg { width: 24px; height: 24px; }
.boxed svg { background: #fff; border: 1px solid #4a8ae8; }
.side-group .label { color: #2040c8; font-size: 13px; }
.side-group .percent { font-size: 16px; }
.side-group .boxed.label { flex: none; width: 24px; height: 24px; margin: 5px 6px; line-height: 20px; background: #fff; border: 2px solid #4a9ae8; }
.side-group .orange { color: #f07030; font-size: 16px; font-weight: bold; }
.side-group .fx { border-color: #208080; border-radius: 5px; }
.fx i { font-style: italic; }
.sidebar hr { margin: 4px 5px 5px; border: none; border-top: 2px solid #aaa; }

/* index strip */
.status { display: flex; align-items: center; height: 36px; background: #f0f0f0; color: #111; border-bottom: 1px solid #204050; line-height: 32px; }
.status-icon { width: 22px; height: 22px; margin: 0 2px 0 1px; }
.index { display: grid; grid-template-columns: 54px 76px 92px 76px 88px; margin-right: 26px; font-size: 24px; font-weight: 300; }
.index b, .status em { font: bold 21px/32px Roboto, "Noto Sans CJK SC", sans-serif; text-align: center; }
.index em { text-align: right; }
.rise b { color: #ff0000; }
.fall b { color: #008000; }
.total { display: flex; gap: 12px; padding: 0 4px; border: solid #aaa; border-width: 0 1px; font-size: 24px; font-weight: 300; }
.server { padding-left: 7px; }

.site-mark {
    position: absolute; right: 5px; bottom: 5px; width: 222px; height: 56px;
    background: #fff; text-align: center; line-height: 24px;
}
.site-mark strong { display: block; font-size: 30px; line-height: 32px; color: #ff3300; }
.site-mark span { display: block; font: bold 20px/20px "DejaVu Sans", sans-serif; color: #ff9900; }
```
